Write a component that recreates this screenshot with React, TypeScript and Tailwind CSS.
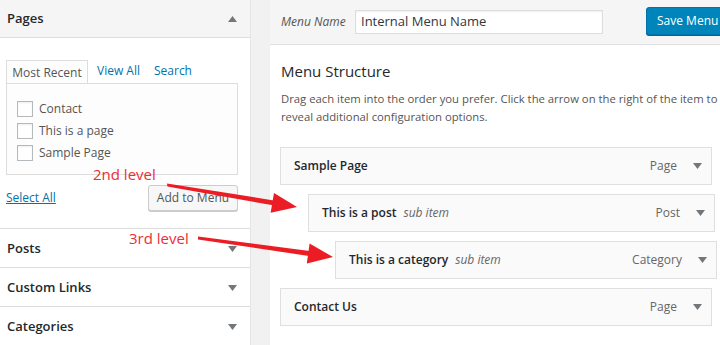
import React from 'react';

const Caret = ({ up = false }: { up?: boolean }) => (
  <svg width="9" height="6" viewBox="0 0 9 6" className="shrink-0">
    {up ? <path d="M0 6 L4.5 0 L9 6 Z" fill="#72777c" /> : <path d="M0 0 L9 0 L4.5 6 Z" fill="#72777c" />}
  </svg>
);

const pages = ['Contact', 'This is a page', 'Sample Page'];
const sections = ['Posts', 'Custom Links', 'Categories'];

type Item = { title: string; sub?: boolean; type: string; indent: string };

const items: Item[] = [
  { title: 'Sample Page', type: 'Page', indent: 'ml-0 w-[432px]' },
  { title: 'This is a post', sub: true, type: 'Post', indent: 'ml-[28px] w-[407px]' },
  { title: 'This is a category', sub: true, type: 'Category', indent: 'ml-[55px] w-[382px]' },
  { title: 'Contact Us', type: 'Page', indent: 'ml-0 w-[432px]' },
];

function LeftPanel() {
  return (
    <div className="w-[251px] shrink-0 bg-white border-r border-[#e5e5e5] flex flex-col">
      <div className="h-[38px] bg-[#f5f5f5] border-b border-[#dddddd] flex items-center justify-between pl-[7px] pr-[13px]">
        <span className="text-[13px] font-semibold text-[#23282d]">Pages</span>
        <Caret up />
      </div>

      <div className="pt-[22px] px-[6px] pr-[12px]">
        <div className="flex items-end text-[12px] h-[23px]">
          <div className="h-[23px] w-[82px] border border-b-0 border-[#dddddd] bg-[#fdfdfd] flex items-center justify-center pt-[1px] text-[#555]">
            Most Recent
          </div>
          <span className="ml-[9px] mb-[3px] text-[#0073aa]">View All</span>
          <span className="ml-[14px] mb-[3px] text-[#0073aa]">Search</span>
        </div>
        <div className="h-[92px] border border-[#dddddd] bg-[#fdfdfd] pt-[17px] pl-[10px] flex flex-col gap-[6px]">
          {pages.map((p) => (
            <div key={p} className="flex items-center gap-[6px] h-[16px]">
              <span className="w-[16px] h-[16px] border border-[#b4b9be] bg-white shadow-[inset_0_1px_2px_rgba(0,0,0,0.07)]" />
              <span className="text-[12px] text-[#555]">{p}</span>
            </div>
          ))}
        </div>
        <div className="flex items-center justify-between mt-[10px] h-[26px]">
          <span className="text-[12px] text-[#0073aa] underline">Select All</span>
          <button className="h-[26px] w-[90px] border border-[#cccccc] rounded-[3px] bg-[#f7f7f7] shadow-[0_1px_0_#cccccc] text-[12px] text-[#555]">
            Add to Menu
          </button>
        </div>
      </div>

      <div className="mt-[17px] flex flex-col">
        {sections.map((s) => (
          <div key={s} className="h-[39px] border-t border-[#dddddd] flex items-center justify-between pl-[7px] pr-[13px] pt-[2px]">
            <span className="text-[13px] font-semibold text-[#23282d]">{s}</span>
            <Caret />
          </div>
        ))}
      </div>
    </div>
  );
}

function RightPanel() {
  return (
    <div className="flex-1 bg-white flex flex-col overflow-hidden">
      <div className="h-[45px] shrink-0 bg-[#f5f5f5] border-b border-[#dfdfdf] flex items-center pl-[11px]">
        <span className="shrink-0 text-[12px] italic text-[#555] w-[74px]">Menu Name</span>
        <div className="shrink-0 w-[248px] h-[24px] border border-[#dddddd] bg-white flex items-center pl-[5px] text-[13px] text-[#32373c] shadow-[inset_0_1px_2px_rgba(0,0,0,0.07)]">
          Internal Menu Name
        </div>
        <button className="ml-[43px] shrink-0 h-[28px] w-[84px] rounded-[3px] bg-[#0085ba] border border-[#0073aa] shadow-[0_1px_0_#006799] text-white text-[12px] text-left pl-[10px] -mt-[2px] whitespace-nowrap">
          Save Menu
        </button>
      </div>

      <div className="pl-[11px] pt-[15px]">
        <h2 className="text-[15px] text-[#23282d] leading-[22px]">Menu Structure</h2>
        <p className="mt-[8px] text-[11.3px] leading-[18px] text-[#555] whitespace-nowrap">
          Drag each item into the order you prefer. Click the arrow on the right of the item to
          <br />
          reveal additional configuration options.
        </p>
      </div>

      <div className="pl-[10px] mt-[21px] flex flex-col gap-[9px]">
        {items.map((it) => (
          <div
            key={it.title}
            className={`${it.indent} h-[38px] shrink-0 border border-[#dfdfdf] bg-[#fafafa] flex items-center pl-[13px] pr-[9px]`}
          >
            <span className="text-[12px] font-semibold text-[#23282d]">{it.title}</span>
            {it.sub && <span className="ml-[7px] text-[12px] italic text-[#666]">sub item</span>}
            <span className="ml-auto text-[12px] text-[#666]">{it.type}</span>
            <span className="ml-[16px]">
              <Caret />
            </span>
          </div>
        ))}
      </div>
    </div>
  );
}

function Annotations() {
  return (
    <div className="absolute inset-0 pointer-events-none">
      <svg width="720" height="345" className="absolute inset-0">
        <polygon points="167,183.6 167.4,186.5 273,205.3 273.8,200.4" fill="#ec1c24" />
        <polygon points="297,207 270.6,212.7 274,192.9" fill="#ec1c24" />
        <polygon points="198,236.6 198,239.5 309,256 309.6,251" fill="#ec1c24" />
        <polygon points="333,257 306.8,263.4 309.6,243.6" fill="#ec1c24" />
      </svg>
      <span className="absolute left-[93px] top-[164px] text-[15px] leading-[20px] text-[#ee2d36]">2nd level</span>
      <span className="absolute left-[129px] top-[228px] text-[15px] leading-[20px] text-[#ee2d36]">3rd level</span>
    </div>
  );
}

export default function App() {
  return (
    <div className="relative w-[720px] h-[345px] overflow-hidden bg-[#f1f1f1] flex font-['Open_Sans',sans-serif]">
      <LeftPanel />
      <div className="w-[19px] shrink-0" />
      <RightPanel />
      <Annotations />
    </div>
  );
}
